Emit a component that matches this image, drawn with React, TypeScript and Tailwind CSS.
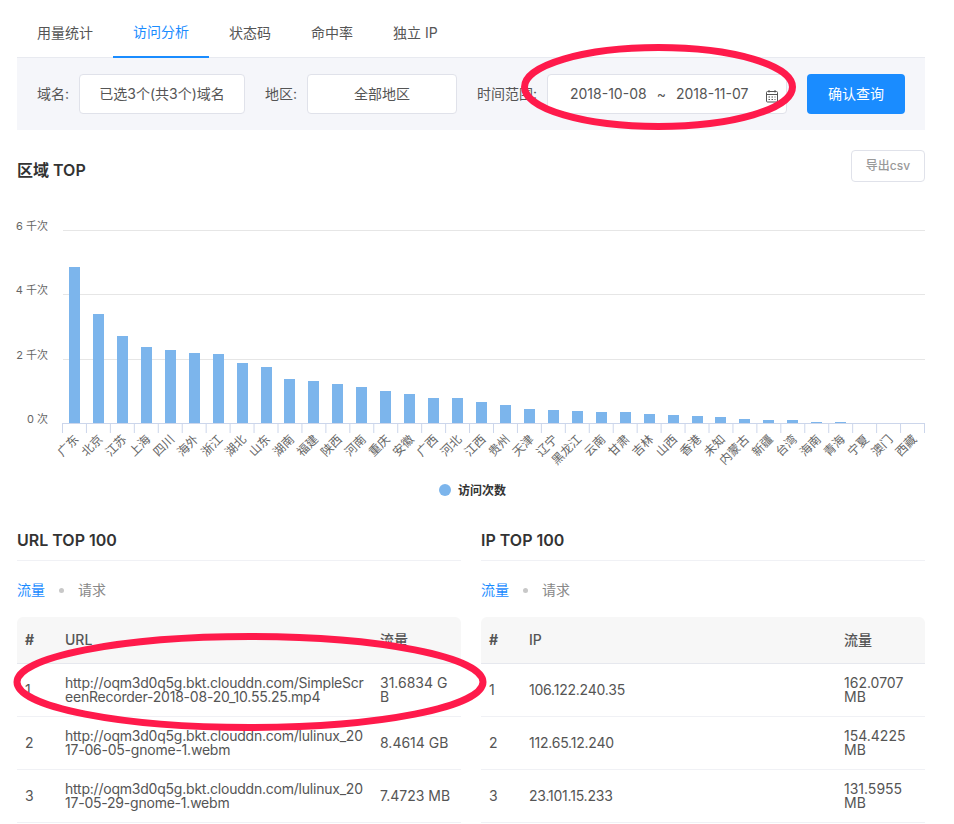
import React from "react";

const font = "font-['Inter','Noto_Sans_CJK_SC',sans-serif]";

const tabs = ["用量统计", "访问分析", "状态码", "命中率", "独立 IP"];

// bar tops were read off the screenshot, baseline is y=423
const regions: [string, number][] = [
  ["广东", 267], ["北京", 314], ["江苏", 336], ["上海", 347], ["四川", 350], ["海外", 353],
  ["浙江", 354], ["湖北", 363], ["山东", 367], ["湖南", 379], ["福建", 381], ["陕西", 384],
  ["河南", 387], ["重庆", 391], ["安徽", 394], ["广西", 398], ["河北", 398], ["江西", 402],
  ["贵州", 405], ["天津", 409], ["辽宁", 410], ["黑龙江", 411], ["云南", 412], ["甘肃", 412],
  ["吉林", 414], ["山西", 415], ["香港", 416], ["未知", 417], ["内蒙古", 419], ["新疆", 420],
  ["台湾", 420], ["海南", 422], ["青海", 422], ["宁夏", 423], ["澳门", 423], ["西藏", 423],
];

const yAxis: [string, number][] = [
  ["6 千次", 230.5],
  ["4 千次", 294.5],
  ["2 千次", 359.5],
  ["0 次", 423.5],
];

const urlRows = [
  ["1", "http://oqm3d0q5g.bkt.clouddn.com/SimpleScreenRecorder-2018-08-20_10.55.25.mp4", "31.6834 GB"],
  ["2", "http://oqm3d0q5g.bkt.clouddn.com/lulinux_2017-06-05-gnome-1.webm", "8.4614 GB"],
  ["3", "http://oqm3d0q5g.bkt.clouddn.com/lulinux_2017-05-29-gnome-1.webm", "7.4723 MB"],
];

const ipRows = [
  ["1", "106.122.240.35", "162.0707 MB"],
  ["2", "112.65.12.240", "154.4225 MB"],
  ["3", "23.101.15.233", "131.5955 MB"],
];

function Chart() {
  const step = 862 / 36;
  return (
    <svg width="954" height="300" viewBox="0 210 954 300" className="block -ml-[17px]">
      {yAxis.slice(0, 3).map(([label, y]) => (
        <line key={label} x1="63" x2="925" y1={y} y2={y} stroke="#e6e6e6" />
      ))}
      {yAxis.map(([label, y]) => (
        <text key={label} x="48" y={y - 1} textAnchor="end" fontSize="11" fill="#666">
          {label}
        </text>
      ))}
      {regions.map(([name, top], i) => {
        const cx = 62.5 + step * (i + 0.5);
        return (
          <g key={name}>
            <rect x={Math.round(cx - 5.5)} y={top} width="11" height={423 - top} fill="#7cb5ec" />
            <line x1={62.5 + step * i} x2={62.5 + step * i} y1="423" y2="433" stroke="#ccd6eb" />
            <text
              x={cx + 5}
              y="440"
              textAnchor="end"
              fontSize="12"
              fill="#666"
              transform={`rotate(-45 ${cx + 5} 440)`}
            >
              {name}
            </text>
          </g>
        );
      })}
      <line x1="924.5" x2="924.5" y1="423" y2="433" stroke="#ccd6eb" />
      <line x1="62" x2="925" y1="423.5" y2="423.5" stroke="#ccd6eb" />
      <circle cx="445" cy="490" r="6" fill="#7cb5ec" />
      <text x="458" y="495" fontSize="12" fontWeight="700" fill="#333">
        访问次数
      </text>
    </svg>
  );
}

function CalendarIcon() {
  return (
    <svg width="14" height="14" viewBox="0 0 14 14" fill="none" stroke="#555" className="absolute right-[7px] top-[14px]">
      <rect x="1.5" y="2.5" width="11" height="10.5" rx="1" />
      <path d="M1.5 5.5h11M4 1v2.5M10 1v2.5" />
      <path d="M3.5 8h7M3.5 10.5h7" strokeDasharray="1.5 1.5" />
    </svg>
  );
}

function TopTable({ title, column, rows }: { title: string; column: string; rows: string[][] }) {
  return (
    <div className="w-[444px]">
      <h3 className="h-[44px] border-b border-[#f0f1f5] text-base leading-[46px] font-semibold text-[#333]">{title}</h3>
      <div className="flex h-[56px] items-center pt-[2px] text-sm">
        <span className="text-[#1a8cff]">流量</span>
        <span className="mx-[14px] h-[5px] w-[5px] rounded-full bg-[#c8c8c8]" />
        <span className="text-[#888]">请求</span>
      </div>
      <div className="flex h-[47px] items-center rounded-t-md border-b border-[#e6e8ee] bg-[#f7f7f7] text-sm font-medium text-[#555]">
        <div className="w-[40px] pl-2 font-bold">#</div>
        <div className="w-[315px] px-2">{column}</div>
        <div className="flex-1 px-2">流量</div>
      </div>
      {rows.map(([n, main, flow]) => (
        <div key={n} className="flex h-[53px] items-center border-b border-[#f0f1f5] text-sm leading-[14px] text-[#555]">
          <div className="w-[40px] pl-2">{n}</div>
          <div className="w-[315px] px-2 tracking-[-0.22px] break-all">{main}</div>
          <div className="flex-1 px-2 break-all">{flow}</div>
        </div>
      ))}
    </div>
  );
}

export default function App() {
  return (
    <div className={`relative h-[824px] overflow-hidden bg-white ${font}`}>
      <div className="ml-[17px] w-[908px]">
        <div className="flex h-[58px] border-b border-[#e8eaf0] text-sm text-[#555]">
          {tabs.map((tab, i) => (
            <div
              key={tab}
              className={
                i === 1
                  ? "-mb-px flex h-[58px] items-center border-b-2 border-[#1a8cff] px-5 pt-2 text-[#1a8cff]"
                  : "flex h-[57px] items-center px-5 pt-2"
              }
            >
              {tab}
            </div>
          ))}
        </div>

        <div className="flex h-[72px] items-center bg-[#f5f6fa] pl-5 text-sm text-[#555]">
          <span className="w-[42px] shrink-0">域名:</span>
          <div className="flex h-10 w-[166px] items-center justify-center rounded-[4px] border border-[#e0e2ea] bg-white">
            已选3个(共3个)域名
          </div>
          <span className="ml-5 w-[42px] shrink-0">地区:</span>
          <div className="flex h-10 w-[150px] items-center justify-center rounded-[4px] border border-[#e0e2ea] bg-white">
            全部地区
          </div>
          <span className="ml-5 w-[70px] shrink-0">时间范围:</span>
          <div className="relative flex h-10 w-[240px] items-center rounded-[4px] border border-[#e0e2ea] bg-white pl-[22px]">
            <span className="w-[77px]">2018-10-08</span>
            <span className="w-[29px] text-center">~</span>
            <span>2018-11-07</span>
            <CalendarIcon />
          </div>
          <button className="ml-5 h-10 w-[98px] rounded-[4px] bg-[#1a8cff] text-sm text-white">确认查询</button>
        </div>

        <div className="flex h-[80px] items-center justify-between">
          <h2 className="text-base font-semibold text-[#333]">区域 TOP</h2>
          <button className="mb-2 h-8 w-[74px] rounded-[4px] border border-[#e0e2ea] text-xs font-medium text-[#999]">导出csv</button>
        </div>

        <Chart />

        <div className="mt-[7px] flex justify-between">
          <TopTable title="URL TOP 100" column="URL" rows={urlRows} />
          <TopTable title="IP TOP 100" column="IP" rows={ipRows} />
        </div>
      </div>

      {/* hand drawn red marks on top of the screenshot */}
      <svg width="954" height="824" fill="none" stroke="#ff1a4b" strokeWidth="7" className="pointer-events-none absolute top-0 left-0">
        <ellipse cx="658.5" cy="87" rx="134" ry="39.5" />
        <ellipse cx="250" cy="682" rx="233" ry="45.5" />
      </svg>
    </div>
  );
}
